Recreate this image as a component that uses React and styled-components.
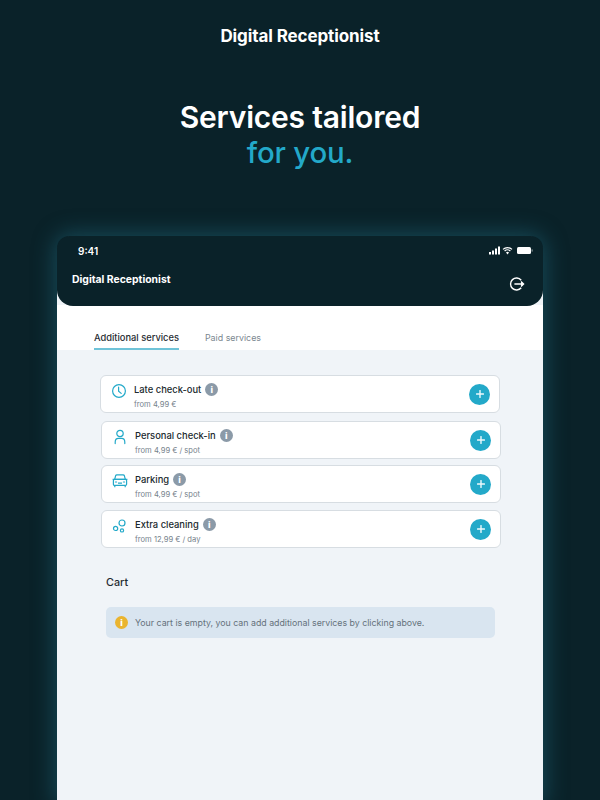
import React from "react";
import styled, { createGlobalStyle } from "styled-components";

const Global = createGlobalStyle`
  html, body { margin: 0; padding: 0; background: #0a2229; }
  body { font-family: Inter, "Noto Sans", sans-serif; overflow: hidden; }
`;
const Page = styled.div`
  width: 600px; height: 800px; background: #0a2229; overflow: hidden;
  display: flex; flex-direction: column; align-items: center;
`;
const Brand = styled.div`
  margin-top: 26px; height: 20px; line-height: 20px; font-size: 17px; font-weight: 700;
  color: #fff; letter-spacing: -0.1px;
`;
const Headline = styled.h1`
  margin: 54px 0 0; text-align: center; font-size: 30px; line-height: 35px; font-weight: 600;
  color: #fff; letter-spacing: -0.2px;
`;
const Accent = styled.span` display: block; color: #23a9c9; font-size: 29.4px; font-weight: 500; `;
const Device = styled.div`
  margin-top: 66px; width: 486px; flex: 1; display: flex; flex-direction: column;
  background: #f0f4f8; border-radius: 16px 16px 0 0;
  box-shadow: 0 0 20px 4px rgba(32, 104, 124, 0.5);
`;
const AppHeader = styled.header`
  height: 70px; background: #0a2229; border-radius: 12px 12px 16px 16px; flex: none;
  display: flex; flex-direction: column; color: #fff; position: relative; z-index: 1;
  box-sizing: border-box; padding: 8px 10px 0 15px;
`;
const StatusBar = styled.div`
  display: flex; justify-content: space-between; align-items: center; height: 13px;
  padding-left: 6px;
`;
const Time = styled.span` font-size: 10px; font-weight: 600; color: #fff; `;
const StatusIcons = styled.svg` display: block; `;
const TitleRow = styled.div`
  display: flex; justify-content: space-between; align-items: center; margin-top: 10px; height: 24px;
`;
const AppTitle = styled.span` font-size: 10.4px; font-weight: 700; color: #fff; margin-top: 0; `;
const Exit = styled.svg` display: block; margin: 9px 8px 0 0; `;
const Tabs = styled.nav`
  height: 45px; flex: none; background: #fff; margin-top: -1px;
  display: flex; align-items: flex-end; gap: 26px; padding-left: 37px;
`;
const Tab = styled.div`
  font-size: ${p => (p.$active ? "9.3px" : "8.9px")}; line-height: 13px; height: 20px;
  box-sizing: border-box; padding: 1px 0 0;
  color: ${p => (p.$active ? "#1f2b31" : "#7b8790")};
  font-weight: ${p => (p.$active ? 500 : 400)};
  border-bottom: ${p => (p.$active ? "2px solid #6fc3d8" : "2px solid transparent")};
`;
const Content = styled.main`
  flex: 1; padding-top: 25px; display: flex; flex-direction: column;
`;
const Cards = styled.div` display: flex; flex-direction: column; `;
const Card = styled.div`
  box-sizing: border-box; width: 400px; height: 38px; background: #fff;
  border: 1px solid #d7dde2; border-radius: 6px;
  margin: ${p => p.$top}px 0 0 ${p => p.$left}px;
  display: flex; align-items: center; padding: 0 9px 0 10px;
`;
const IconSlot = styled.div`
  width: 16px; height: 16px; flex: none; color: #23a9c9; margin-top: -6px; margin-right: 7px;
  svg { display: block; }
`;
const Texts = styled.div` flex: 1; display: flex; flex-direction: column; `;
const NameRow = styled.div` display: flex; align-items: center; gap: 4px; height: 16px; margin-top: 2px; `;
const Name = styled.span` font-size: 9.4px; font-weight: 500; color: #20292e; `;
const Price = styled.span` font-size: 7.6px; color: #76828b; margin-top: 2px; line-height: 9px; `;
const InfoDot = styled.span`
  width: 13px; height: 13px; border-radius: 50%; background: ${p => p.$c || "#8b9aa8"};
  color: #fff; font-size: 9px; font-weight: 800; line-height: 13px; text-align: center;
  display: inline-block; flex: none;
`;
const Add = styled.button`
  width: 21px; height: 21px; border-radius: 50%; border: none; padding: 0; background: #23a9c9;
  display: flex; align-items: center; justify-content: center; flex: none;
`;
const CartTitle = styled.h2`
  margin: 28px 0 0 49px; font-size: 10.8px; line-height: 13px; font-weight: 500; color: #1f2b31;
`;
const Notice = styled.div`
  box-sizing: border-box; margin: 18px 0 0 49px; width: 389px; height: 31px; border-radius: 5px;
  background: #d9e5f0; display: flex; align-items: center; gap: 7px; padding-left: 9px;
  font-size: 8.8px; color: #65727c;
`;

const Plus = () => (
  <svg width="8" height="8" viewBox="0 0 8 8"><path d="M4 .6v6.8M.6 4h6.8" stroke="#eef9fc" strokeWidth="1.4" strokeLinecap="round" /></svg>
);
const Clock = () => (
  <svg width="16" height="16" viewBox="0 0 16 16" fill="none" stroke="currentColor" strokeWidth="1.2"><circle cx="8" cy="8" r="6.4" /><path d="M7.6 4.2v4l2.6 2.2" strokeLinecap="round" /></svg>
);
const Person = () => (
  <svg width="16" height="16" viewBox="0 0 16 16" fill="none" stroke="currentColor" strokeWidth="1.2"><circle cx="8" cy="4.5" r="3.2" /><path d="M3.2 14.6v-1.4c0-2.2 1.4-3.8 3.2-3.8h3.2c1.8 0 3.2 1.6 3.2 3.8v1.4" strokeLinecap="round" /></svg>
);
const Car = () => (
  <svg width="16" height="16" viewBox="0 0 16 16" fill="none" stroke="currentColor" strokeWidth="1.2"><path d="M2.6 6.6 3.6 2.8c.2-.6.7-1 1.3-1h6.2c.6 0 1.1.4 1.3 1l1 3.8" /><rect x="1.4" y="6.4" width="13.2" height="6" rx="1.2" /><path d="M.6 6.4h14.8M2.8 12.4v1.8M13.2 12.4v1.8M6 10.2h4" /><path d="M3.4 9h1.2M11.4 9h1.2" strokeLinecap="round" /></svg>
);
const Bubbles = () => (
  <svg width="16" height="16" viewBox="0 0 16 16" fill="none" stroke="currentColor" strokeWidth="1.2"><circle cx="10" cy="5" r="3" /><circle cx="3.6" cy="10.4" r="2.1" /><circle cx="10" cy="12.4" r="1.6" /></svg>
);

const items = [
  { name: "Late check-out", price: "from 4,99 €", Icon: Clock, top: 0, left: 43 },
  { name: "Personal check-in", price: "from 4,99 € / spot", Icon: Person, top: 8, left: 44 },
  { name: "Parking", price: "from 4,99 € / spot", Icon: Car, top: 6, left: 44 },
  { name: "Extra cleaning", price: "from 12,99 € / day", Icon: Bubbles, top: 7, left: 44 },
];

export default function App() {
  return (
    <Page>
      <Global />
      <Brand>Digital Receptionist</Brand>
      <Headline>Services tailored<Accent>for you.</Accent></Headline>
      <Device>
        <AppHeader>
          <StatusBar>
            <Time>9:41</Time>
            <StatusIcons width="44" height="9" viewBox="0 0 44 9" fill="#fff">
              <rect x="0" y="6" width="2" height="2.5" /><rect x="3" y="4.5" width="2" height="4" /><rect x="6" y="2.5" width="2" height="6" /><rect x="9" y="0.5" width="2" height="8" />
              <path d="M14 3.4a6.4 6.4 0 0 1 9 0M15.6 5a4.2 4.2 0 0 1 5.8 0" fill="none" stroke="#fff" strokeWidth="1.2" />
              <path d="M17 6.5a2 2 0 0 1 3 0L18.5 8.4z" />
              <rect x="28" y="1" width="14" height="7" rx="1.5" /><rect x="42.6" y="3.4" width="1" height="2.2" opacity=".6" />
            </StatusIcons>
          </StatusBar>
          <TitleRow>
            <AppTitle>Digital Receptionist</AppTitle>
            <Exit width="16" height="16" viewBox="0 0 16 16" fill="none" stroke="#fff" strokeWidth="1.4">
              <path d="M12.2 4.2A6 6 0 1 0 12.2 11.8" />
              <path d="M5.4 8h9M12 5.6 14.6 8 12 10.4" fill="#fff" strokeWidth="1.3" />
            </Exit>
          </TitleRow>
        </AppHeader>
        <Tabs>
          <Tab $active>Additional services</Tab>
          <Tab>Paid services</Tab>
        </Tabs>
        <Content>
          <Cards>
            {items.map(({ name, price, Icon, top, left }) => (
              <Card key={name} $top={top} $left={left}>
                <IconSlot><Icon /></IconSlot>
                <Texts>
                  <NameRow><Name>{name}</Name><InfoDot>i</InfoDot></NameRow>
                  <Price>{price}</Price>
                </Texts>
                <Add aria-label="Add"><Plus /></Add>
              </Card>
            ))}
          </Cards>
          <CartTitle>Cart</CartTitle>
          <Notice>
            <InfoDot $c="#eab42f">i</InfoDot>
            Your cart is empty, you can add additional services by clicking above.
          </Notice>
        </Content>
      </Device>
    </Page>
  );
}
